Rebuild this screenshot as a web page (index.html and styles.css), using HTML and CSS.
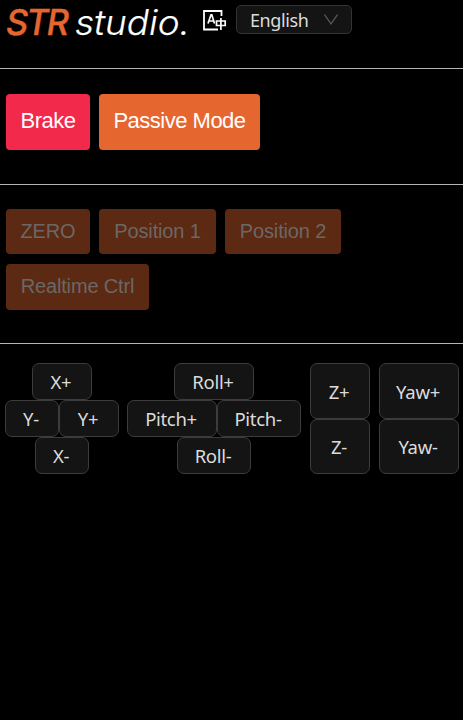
FILE: index.html
```html
<!DOCTYPE html>
<html lang="en">
<head>
<meta charset="utf-8">
<title>STR studio</title>
<link rel="stylesheet" href="styles.css">
</head>
<body>
<header class="header">
  <svg class="logo" width="190" height="45" viewBox="0 0 190 45" role="img" aria-label="STR studio.">
    <text class="logo-str" x="6" y="35" textLength="61" lengthAdjust="spacingAndGlyphs">STR</text>
    <text class="logo-studio" x="75" y="35" textLength="115" lengthAdjust="spacingAndGlyphs">studio.</text>
  </svg>
  <svg class="lang-icon" width="24" height="22" viewBox="0 0 24 22" fill="none" stroke="#fff" stroke-width="1.8">
    <path d="M18.5 6V1H1v18.5h14"/>
    <path d="M5 13.5 8 4.8h.8l2.7 8.7M6.3 11h4.3" stroke-width="1.7"/>
    <path d="M13.5 11h8.7v4.5h-8.7zM17.9 8v12" stroke-width="1.7"/>
  </svg>
  <button class="select"><span class="select-text">English</span>
    <svg width="14" height="11" viewBox="0 0 14 11" fill="none" stroke="#585858" stroke-width="1.3"><path d="M.5 .5l6.5 9.3L13.5 .5"/></svg>
  </button>
</header>
<section class="modes">
  <button class="btn brake">Brake</button>
  <button class="btn passive">Passive Mode</button>
</section>
<section class="positions">
  <button class="btn off zero" disabled>ZERO</button>
  <button class="btn off pos1" disabled>Position 1</button>
  <button class="btn off pos2" disabled>Position 2</button>
  <button class="btn off realtime" disabled>Realtime Ctrl</button>
</section>
<main class="jog">
  <div class="pad xy">
    <div class="row"><button class="key w60">X+</button></div>
    <div class="row"><button class="key w54">Y-</button><button class="key w60">Y+</button></div>
    <div class="row"><button class="key w54">X-</button></div>
  </div>
  <div class="pad tilt">
    <div class="row"><button class="key roll-up">Roll+</button></div>
    <div class="row"><button class="key pitch-up">Pitch+</button><button class="key pitch-down">Pitch-</button></div>
    <div class="row"><button class="key roll-down">Roll-</button></div>
  </div>
  <div class="pad z"><button class="key tall">Z+</button><button class="key tall">Z-</button></div>
  <div class="pad yaw"><button class="key tall">Yaw+</button><button class="key tall">Yaw-</button></div>
</main>
</body>
</html>
```
FILE: styles.css
```css
* { box-sizing: border-box; }
body { margin: 0; min-height: 720px; background: #000; overflow: hidden; }
button { margin: 0; padding: 0; white-space: nowrap; }
svg { display: block; flex: none; }
.header { display: flex; align-items: flex-start; height: 69px; border-bottom: 1px solid #b5b5b5; }
.logo-str, .logo-studio { font-family: Inter, sans-serif; font-style: italic; font-size: 35px; }
.logo-str { font-weight: 500; fill: #e66630; stroke: #e66630; stroke-width: .4; letter-spacing: -2px; }
.logo-studio { font-weight: 300; fill: #fff; stroke: #fff; stroke-width: .2; }
.lang-icon { margin: 10px 0 0 13px; }
.select { display: flex; align-items: center; justify-content: space-between; width: 116px; height: 29px; margin: 5px 0 0 9px; padding: 0 13px 0 13px; border: 1px solid #333; border-radius: 5px; background: #141414; color: #dcdcdc; font: 18px "Noto Sans", sans-serif; letter-spacing: -0.4px; }
.modes { display: flex; gap: 9px; height: 116px; padding: 25px 6px 0; border-bottom: 1px solid #b5b5b5; }
.btn { border: 0; border-radius: 4px; font-family: "Liberation Sans", sans-serif; color: #fff; }
.modes .btn { height: 56px; padding-bottom: 2px; font-size: 22px; letter-spacing: -0.5px; }
.brake { width: 84px; background: #f2294b; }
.passive { width: 161px; background: #e66630; }
.positions { display: flex; flex-wrap: wrap; align-content: flex-start; gap: 10px 9px; height: 159px; padding: 24px 6px 0; border-bottom: 1px solid #b5b5b5; }
.positions .btn { height: 45px; font-size: 20px; letter-spacing: -0.15px; }
.positions .off { background: #5c2913; color: #6a6866; }
.zero { width: 84px; }
.pos1 { width: 117px; }
.pos2 { width: 116px; }
.positions .realtime { width: 143px; height: 46px; padding-bottom: 2px; }
.jog { display: flex; padding: 19px 0 0 5px; }
.pad { display: flex; flex-direction: column; flex: none; }
.row { display: flex; justify-content: center; }
.key { height: 37px; padding-right: 2px; border: 1px solid #3c3c3c; border-radius: 7px; background: #141414; color: #dcdcdc; font: 18.5px "Noto Sans", sans-serif; letter-spacing: -0.3px; }
.w60 { width: 60px; }
.w54 { width: 54px; }
.xy { width: 114px; }
.tilt { width: 174px; margin-left: 8px; }
.roll-up { width: 80px; }
.pitch-up { width: 90px; }
.pitch-down { width: 84px; }
.roll-down { width: 74px; }
.z { width: 60px; margin-left: 9px; }
.yaw { width: 80px; margin-left: 9px; }
.tall { height: 56px; }
.tall:last-child { height: 55px; }
```
